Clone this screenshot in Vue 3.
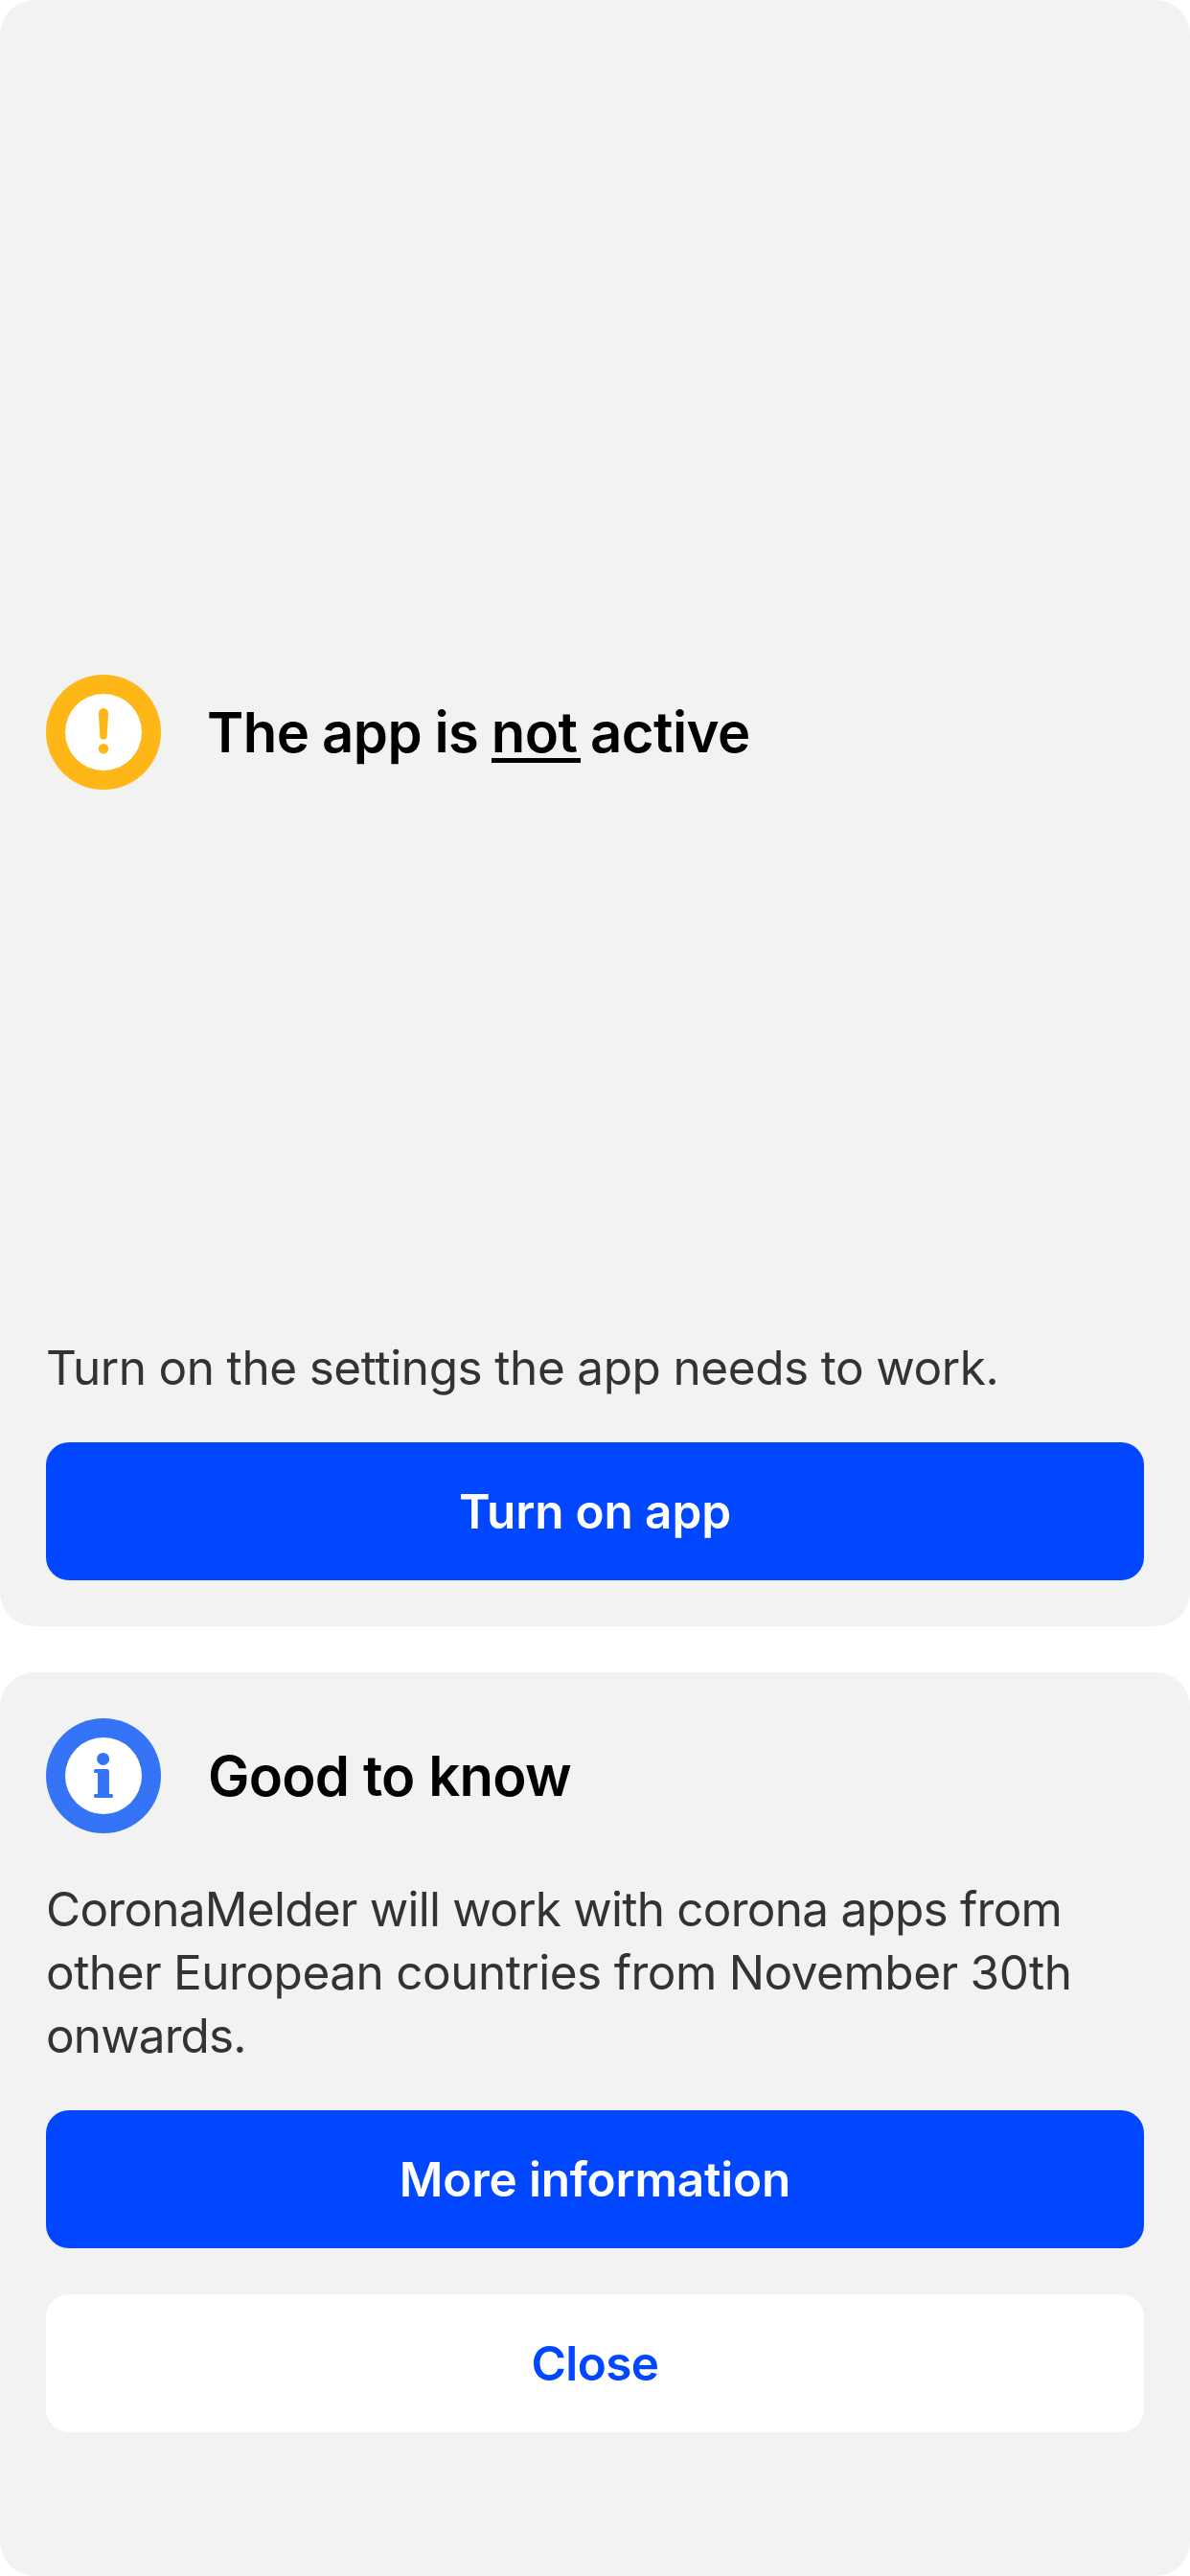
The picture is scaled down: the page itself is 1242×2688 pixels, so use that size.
<script setup>
</script>

<template>
  <main class="screen">
    <section class="card status">
      <header class="card-header">
        <svg class="icon" viewBox="0 0 120 120" aria-hidden="true">
          <circle cx="60" cy="60" r="60" fill="#ffb717" />
          <circle cx="60" cy="60" r="40" fill="#fff" />
          <path d="M54.9 40.1a5.1 5.1 0 0 1 10.2 0l-1.4 23.8a3.7 3.7 0 0 1-7.4 0z" fill="#ffb717" />
          <circle cx="60" cy="77.3" r="5.2" fill="#ffb717" />
        </svg>
        <h1 class="title title-status">The app is <span class="underlined">not</span> active</h1>
      </header>
      <p class="text status-text">Turn on the settings the app needs to work.</p>
      <button class="button primary turn-on">Turn on app</button>
    </section>

    <section class="card info">
      <header class="card-header">
        <svg class="icon" viewBox="0 0 120 120" aria-hidden="true">
          <circle cx="60" cy="60" r="60" fill="#3574f6" />
          <circle cx="60" cy="60" r="40" fill="#fff" />
          <circle cx="59.6" cy="42.4" r="6.5" fill="#3574f6" />
          <path d="M51.5 53h12.4a2 2 0 0 1 2 2v24h2.5a1.5 1.5 0 0 1 1.5 1.5v1a1.5 1.5 0 0 1-1.5 1.5H51.5a1.5 1.5 0 0 1-1.5-1.5v-1a1.5 1.5 0 0 1 1.5-1.5H54V57h-2.5a1.5 1.5 0 0 1-1.5-1.5v-1a1.5 1.5 0 0 1 1.5-1.5z" fill="#3574f6" />
        </svg>
        <h2 class="title title-info">Good to know</h2>
      </header>
      <p class="text info-text"><span class="line-a">CoronaMelder will work with corona apps from</span><br /><span class="line-b">other European countries from November 30th</span><br /><span class="line-c">onwards.</span></p>
      <button class="button primary more">More information</button>
      <button class="button secondary">Close</button>
    </section>
  </main>
</template>

<style>
body { background: #fff; }
</style>

<style scoped>
.screen {
  box-sizing: border-box;
  width: 1242px;
  height: 2688px;
  display: flex;
  flex-direction: column;
  gap: 48px;
  font-family: Inter, "Liberation Sans", sans-serif;
}
.card {
  box-sizing: border-box;
  display: flex;
  flex-direction: column;
  padding: 48px;
  background: #f2f2f2;
  border-radius: 36px;
}
.status { height: 1697px; justify-content: flex-end; }
.info { flex: 1; }
.card-header { display: flex; align-items: center; gap: 48px; }
.icon { width: 120px; height: 120px; flex: none; }
.title { margin: 0; font-size: 58px; line-height: 72px; font-weight: 600; color: #000; }
.title-status { letter-spacing: -0.5px; word-spacing: -0.8px; }
.title-info { padding-left: 1px; letter-spacing: -0.75px; word-spacing: 0.8px; }
/* The rule runs slightly past the last letter */
.underlined {
  padding-right: 3px;
  margin-right: -3px;
  background: linear-gradient(#000, #000) 0 62px / 100% 5px no-repeat;
}
.text { margin: 0; font-size: 49.5px; line-height: 66px; font-weight: 400; color: #333; white-space: nowrap; }
.status-text { margin: 570px 0 45px; letter-spacing: -0.4px; word-spacing: -0.6px; }
.info-text { margin: 46px 0 45px; }
.line-a { letter-spacing: -0.75px; word-spacing: -0.1px; }
.line-b { letter-spacing: -0.5px; word-spacing: -0.5px; }
.line-c { letter-spacing: -0.9px; }
.button {
  height: 144px;
  flex: none;
  border: 0;
  padding: 0;
  border-radius: 24px;
  font: 600 49.5px/66px Inter, "Liberation Sans", sans-serif;
}
.primary { background: #0047ff; color: #fff; }
.turn-on { letter-spacing: -0.14px; }
.more { letter-spacing: -0.2px; }
.secondary { margin-top: 48px; background: #fff; color: #0047ff; letter-spacing: -0.6px; }
</style>
